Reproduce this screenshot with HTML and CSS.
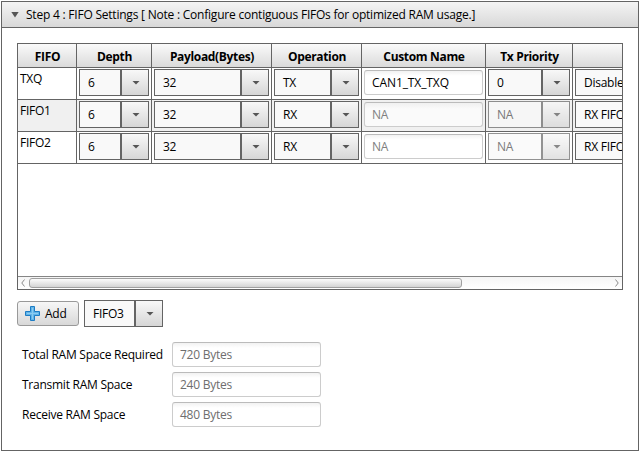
FILE: index.html
```html
<!DOCTYPE html>
<html lang="en">
<head>
<meta charset="utf-8">
<title>FIFO Settings</title>
<link rel="stylesheet" href="styles.css">
</head>
<body>
<section class="panel">
  <header class="panel-head"><i class="arrow big"></i><span class="title">Step 4 : FIFO Settings [ Note : Configure contiguous FIFOs for optimized RAM usage.]</span></header>
  <div class="content">
    <div class="table">
      <div class="row head">
        <div>FIFO</div><div>Depth</div><div>Payload(Bytes)</div><div>Operation</div><div>Custom Name</div><div>Tx Priority</div><div></div>
      </div>
      <div class="row">
        <div class="name">TXQ</div>
        <div><div class="combo"><span>6</span><b><i class="arrow"></i></b></div></div>
        <div><div class="combo"><span>32</span><b><i class="arrow"></i></b></div></div>
        <div><div class="combo"><span>TX</span><b><i class="arrow"></i></b></div></div>
        <div><div class="field custom">CAN1_TX_TXQ</div></div>
        <div><div class="combo"><span>0</span><b><i class="arrow"></i></b></div></div>
        <div><div class="combo"><span>Disable</span><b><i class="arrow"></i></b></div></div>
      </div>
      <div class="row odd">
        <div class="name">FIFO1</div>
        <div><div class="combo"><span>6</span><b><i class="arrow"></i></b></div></div>
        <div><div class="combo"><span>32</span><b><i class="arrow"></i></b></div></div>
        <div><div class="combo"><span>RX</span><b><i class="arrow"></i></b></div></div>
        <div><div class="field prompt">NA</div></div>
        <div><div class="combo off"><span>NA</span><b><i class="arrow"></i></b></div></div>
        <div><div class="combo"><span>RX FIFO</span><b><i class="arrow"></i></b></div></div>
      </div>
      <div class="row">
        <div class="name">FIFO2</div>
        <div><div class="combo"><span>6</span><b><i class="arrow"></i></b></div></div>
        <div><div class="combo"><span>32</span><b><i class="arrow"></i></b></div></div>
        <div><div class="combo"><span>RX</span><b><i class="arrow"></i></b></div></div>
        <div><div class="field prompt">NA</div></div>
        <div><div class="combo off"><span>NA</span><b><i class="arrow"></i></b></div></div>
        <div><div class="combo"><span>RX FIFO</span><b><i class="arrow"></i></b></div></div>
      </div>
      <div class="scroll">
        <svg width="4" height="8" viewBox="0 0 4 8"><path d="M3.5 .5L.8 4l2.7 3.5"/></svg>
        <div class="track"><div class="thumb"></div></div>
        <svg width="4" height="8" viewBox="0 0 4 8"><path d="M.5 .5L3.2 4 .5 7.500"/></svg>
      </div>
    </div>
    <div class="actions">
      <div class="button"><svg width="16" height="16" viewBox="0 0 16 16"><path d="M5.500.500h4v5h5v4h-5v5h-4v-5h-5v-4h5z" fill="#62b4e8" stroke="#1c7cc4"/><path d="M7.500 2v11M2 7.500h11" stroke="#8accf2" fill="none"/></svg><span>Add</span></div>
      <div class="combo"><span>FIFO3</span><b><i class="arrow"></i></b></div>
    </div>
    <div class="summary">
      <label>Total RAM Space Required</label><div class="field">720 Bytes</div>
      <label>Transmit RAM Space</label><div class="field">240 Bytes</div>
      <label>Receive RAM Space</label><div class="field">480 Bytes</div>
    </div>
  </div>
</section>
</body>
</html>
```
FILE: styles.css
```css
* { box-sizing: border-box; }
body { margin: 0; background: #fff; color: #000; font: 12px/16px "Open Sans", "Noto Sans", sans-serif; letter-spacing: -0.25px; }
.panel { margin: 1px; width: 638px; height: 450px; border: 1px solid #646464; }
.panel-head { height: 26px; display: flex; align-items: center; padding-left: 9px; border-bottom: 1px solid #646464; background: linear-gradient(#f4f4f4, #d8d8d8); }
.title { margin-left: 7px; white-space: nowrap; letter-spacing: -0.22px; }
.arrow { width: 8px; height: 4px; background: #555; clip-path: polygon(0 0, 100% 0, 50% 100%); flex: none; }
.arrow.big { width: 8px; height: 6px; }
.content { padding: 15px; }
.table { width: 606px; height: 247px; border: 1px solid #646464; overflow: hidden; display: flex; flex-direction: column; }
.row { display: grid; grid-template-columns: 59px 75px 120px 90px 124px 87px 120px; height: 32px; flex: none; }
.row > div { border-right: 1px solid #646464; border-bottom: 1px solid #646464; padding: 1px 2px; min-width: 0; }
.row.head { height: 24px; font-weight: bold; text-align: center; letter-spacing: -0.33px; background: linear-gradient(#fafafa, #d9d9d9); }
.row.head > div { padding: 5px 1px 0 2px; }
.row > .name { padding: 3px 2px 0; }
.odd { background: #f0f0f0; }
.combo { height: 27px; display: flex; border: 1px solid #646464; background: #f9f9f9; }
.combo span { flex: 1; min-width: 0; padding: 5px 0 0 8px; white-space: nowrap; }
.combo b { width: 28px; padding-left: 2px; border-left: 2px solid #646464; display: flex; align-items: center; justify-content: center; background: linear-gradient(#f8f8f8, #d6d6d6); }
.combo.off { opacity: .7; }
.combo.off span { color: #444; }
.field { height: 25px; border: 1px solid #ccc; border-top-color: #bbb; border-radius: 3px; padding: 4px 7px; background: linear-gradient(#f2f2f2, #fff 5px); white-space: nowrap; }
.row .field { margin-top: 1px; width: 119px; }
.custom { letter-spacing: -0.1px; }
.prompt { color: #808080; }
.odd .field { background: linear-gradient(#f0f0f0, #fafafa 6px); }
.scroll { margin-top: auto; height: 13px; border-top: 1px solid #858585; background: linear-gradient(#f5f5f5, #fff); display: flex; align-items: center; padding: 0 3px; gap: 4px; }
.scroll path { fill: none; stroke: #8c8c8c; }
.track { flex: 1; height: 10px; }
.thumb { width: 433px; height: 10px; border: 1px solid #a0a0a0; border-radius: 3px; background: linear-gradient(#fcfcfc, #d4d4d4); }
.actions { display: flex; margin-top: 10px; gap: 5px; align-items: center; }
.button { width: 62px; height: 25px; border: 1px solid #999; border-radius: 3px; background: linear-gradient(#f7f7f7, #d8d8d8); display: flex; align-items: center; padding-left: 7px; gap: 4px; }
.actions .combo { width: 79px; }
.summary { display: grid; grid-template-columns: 150px 149px; grid-auto-rows: 30px; margin: 15px 0 0 5px; }
.summary label { padding-top: 5px; white-space: nowrap; }
.summary .field { color: #6e6e6e; }
```
